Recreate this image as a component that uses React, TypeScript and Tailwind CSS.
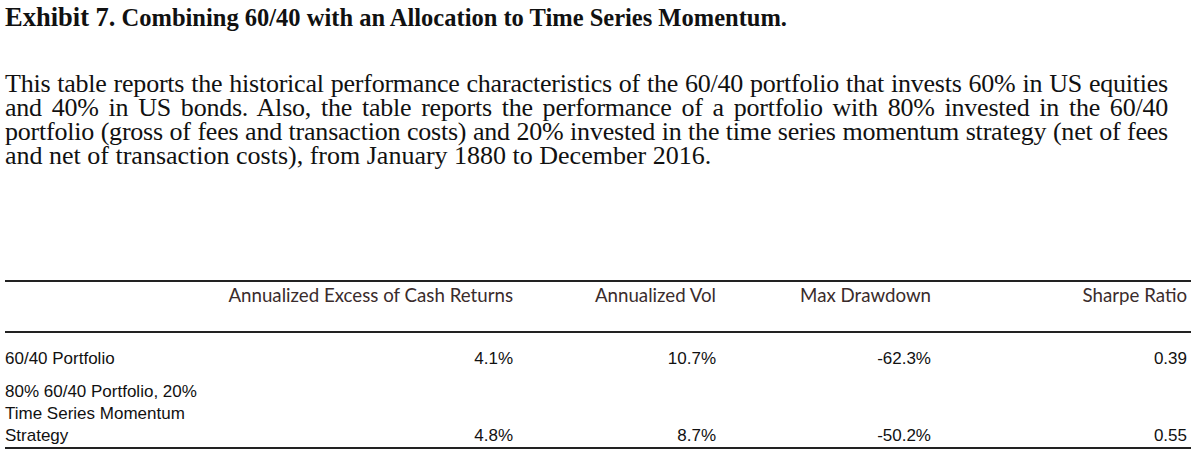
const rows = [
  { label: ["60/40 Portfolio"], values: ["4.1%", "10.7%", "-62.3%", "0.39"] },
  {
    label: ["80% 60/40 Portfolio, 20%", "Time Series Momentum", "Strategy"],
    values: ["4.8%", "8.7%", "-50.2%", "0.55"],
  },
];

const headers = [
  "Annualized Excess of Cash Returns",
  "Annualized Vol",
  "Max Drawdown",
  "Sharpe Ratio",
];

const grid = "grid grid-cols-[200px_308px_203px_215px_256px]";

export default function App() {
  return (
    <div className="h-[454px] w-[1200px] overflow-hidden bg-white text-[#111]">
      <h1 className="px-[5px] pt-[5px] font-['Liberation_Serif',serif] text-[24.5px] font-bold leading-[24px]">
        <span className="text-[26.5px]">Exhibit 7.</span> Combining 60/40 with
        an Allocation to Time Series Momentum.
      </h1>

      <div className="mt-[42px] w-[1168px] pl-[5px] font-['Liberation_Serif',serif] text-[26px] leading-[24px] tracking-[-0.22px]">
        <p className="whitespace-nowrap [text-align-last:justify]">
          This table reports the historical performance characteristics of the
          60/40 portfolio that invests 60% in US equities
        </p>
        <p className="whitespace-nowrap [text-align-last:justify]">
          and 40% in US bonds. Also, the table reports the performance of a
          portfolio with 80% invested in the 60/40
        </p>
        <p className="whitespace-nowrap [text-align-last:justify]">
          portfolio (gross of fees and transaction costs) and 20% invested in
          the time series momentum strategy (net of fees
        </p>
        <p className="whitespace-nowrap tracking-normal">
          and net of transaction costs), from January 1880 to December 2016.
        </p>
      </div>

      <div className="ml-[5px] mt-[112px] w-[1186px]">
        <div className={`${grid} h-[53px] border-y-2 border-[#222] pt-[3px] font-['Lato',sans-serif] text-[18.7px] leading-[20px] text-[#3a2c2c]`}>
          <div />
          {headers.map((h) => (
            <div key={h} className="text-right">
              {h}
            </div>
          ))}
        </div>

        <div className="border-b-2 border-[#222] pt-[15px] font-['Liberation_Sans',sans-serif] text-[17px] leading-[22px]">
          {rows.map((r, i) => (
            <div key={i} className={`${grid} items-end ${i > 0 ? "mt-[11px]" : ""}`}>
              <div className="whitespace-nowrap">
                {r.label.map((l) => (
                  <div key={l}>{l}</div>
                ))}
              </div>
              {r.values.map((v, j) => (
                <div key={j} className="text-right">
                  {v}
                </div>
              ))}
            </div>
          ))}
        </div>
      </div>
    </div>
  );
}
